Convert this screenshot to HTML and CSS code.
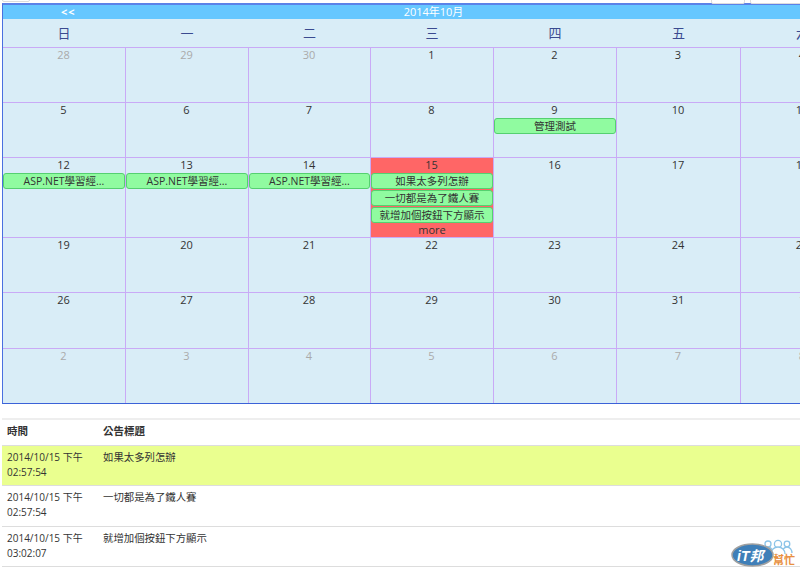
FILE: index.html
```html
<!DOCTYPE html>
<html lang="zh-Hant">
<head>
<meta charset="utf-8">
<title>行事曆</title>
<link rel="stylesheet" href="styles.css">
</head>
<body>
<div class="topbar">
  <span class="topbox tb1"></span>
  <span class="topbox tb2"></span>
  <span class="topbox tb3"></span>
</div>
<section class="calendar">
  <div class="cal-head">
    <span class="prev">&lt;&lt;</span>
    <span class="month">2014年10月</span>
  </div>
  <div class="grid weekdays">
    <div>日</div><div>一</div><div>二</div><div>三</div><div>四</div><div>五</div><div>六</div>
  </div>
  <div class="grid week wk">
    <div class="cell off"><div class="d">28</div></div>
    <div class="cell off"><div class="d">29</div></div>
    <div class="cell off"><div class="d">30</div></div>
    <div class="cell"><div class="d">1</div></div>
    <div class="cell"><div class="d">2</div></div>
    <div class="cell"><div class="d">3</div></div>
    <div class="cell"><div class="d">4</div></div>
  </div>
  <div class="grid week wk">
    <div class="cell"><div class="d">5</div></div>
    <div class="cell"><div class="d">6</div></div>
    <div class="cell"><div class="d">7</div></div>
    <div class="cell"><div class="d">8</div></div>
    <div class="cell"><div class="d">9</div><div class="ev">管理測試</div></div>
    <div class="cell"><div class="d">10</div></div>
    <div class="cell"><div class="d">11</div></div>
  </div>
  <div class="grid week wk-tall">
    <div class="cell"><div class="d">12</div><div class="ev">ASP.NET學習經...</div></div>
    <div class="cell"><div class="d">13</div><div class="ev">ASP.NET學習經...</div></div>
    <div class="cell"><div class="d">14</div><div class="ev">ASP.NET學習經...</div></div>
    <div class="cell today"><div class="d">15</div><div class="ev">如果太多列怎辦</div><div class="ev">一切都是為了鐵人賽</div><div class="ev">就增加個按鈕下方顯示</div><div class="more">more</div></div>
    <div class="cell"><div class="d">16</div></div>
    <div class="cell"><div class="d">17</div></div>
    <div class="cell"><div class="d">18</div></div>
  </div>
  <div class="grid week wk">
    <div class="cell"><div class="d">19</div></div>
    <div class="cell"><div class="d">20</div></div>
    <div class="cell"><div class="d">21</div></div>
    <div class="cell"><div class="d">22</div></div>
    <div class="cell"><div class="d">23</div></div>
    <div class="cell"><div class="d">24</div></div>
    <div class="cell"><div class="d">25</div></div>
  </div>
  <div class="grid week wk-b">
    <div class="cell"><div class="d">26</div></div>
    <div class="cell"><div class="d">27</div></div>
    <div class="cell"><div class="d">28</div></div>
    <div class="cell"><div class="d">29</div></div>
    <div class="cell"><div class="d">30</div></div>
    <div class="cell"><div class="d">31</div></div>
    <div class="cell off"><div class="d">1</div></div>
  </div>
  <div class="grid week wk last">
    <div class="cell off"><div class="d">2</div></div>
    <div class="cell off"><div class="d">3</div></div>
    <div class="cell off"><div class="d">4</div></div>
    <div class="cell off"><div class="d">5</div></div>
    <div class="cell off"><div class="d">6</div></div>
    <div class="cell off"><div class="d">7</div></div>
    <div class="cell off"><div class="d">8</div></div>
  </div>
</section>
<table class="notices">
  <thead>
    <tr><th class="c-time">時間</th><th>公告標題</th></tr>
  </thead>
  <tbody>
    <tr class="hl"><td>2014/10/15 下午<br>02:57:54</td><td class="c-title">如果太多列怎辦</td></tr>
    <tr><td>2014/10/15 下午<br>02:57:54</td><td class="c-title">一切都是為了鐵人賽</td></tr>
    <tr><td>2014/10/15 下午<br>03:02:07</td><td class="c-title">就增加個按鈕下方顯示</td></tr>
  </tbody>
</table>
<div class="logo">
  <svg width="68" height="36" viewBox="0 0 68 36" aria-hidden="true">
    <g fill="#fff" stroke="#8cc4e8" stroke-width="1.3">
      <circle cx="38" cy="8" r="3"/>
      <path d="M33 17c0-3 2-6 5-6s5 3 5 6"/>
      <circle cx="57" cy="8" r="2.8"/>
      <path d="M52 17c0-3 2-6 5-6s5 3 5 6"/>
      <circle cx="48" cy="8" r="3.6"/>
      <path d="M41 18c0-4 3-7 7-7s7 3 7 7"/>
    </g>
    <ellipse cx="22.5" cy="19" rx="20.5" ry="11" fill="#3f7fb8" stroke="#a0a0a0" stroke-width="1.5"/>
    <text x="7" y="25" class="logo-it">iT邦</text>
    <text x="43" y="28" class="logo-help">幫忙</text>
  </svg>
</div>
</body>
</html>
```
FILE: styles.css
```css
html, body {
  margin: 0;
  padding: 0;
  width: 800px;
  height: 576px;
  overflow: hidden;
  background: #fff;
  font-family: "Open Sans", "Noto Sans CJK TC", sans-serif;
  color: #333;
}
.topbar {
  height: 3px;
  position: relative;
}
.topbox {
  position: absolute;
  top: -4px;
  height: 6px;
  background: #fff;
  border: 1px solid #ddd;
  box-sizing: border-box;
  border-radius: 2px;
}
.tb1 { left: 2px; width: 28px; }
.tb2 { left: 711px; width: 34px; z-index: 2; top: -2px; }
.tb3 { left: 750px; width: 60px; z-index: 2; top: -2px; }
.calendar {
  margin-left: 2px;
  width: 862px;
  height: 401px;
  box-sizing: border-box;
  border-top: 2px solid #5b82e8;
  border-left: 1px solid #4a70e0;
  border-bottom: 1px solid #3b62d8;
  background: #d9edf7;
}
.cal-head {
  height: 14px;
  background: #66c7ff;
  color: #fff;
  font-size: 11px;
  line-height: 14px;
  position: relative;
  text-align: center;
}
.month { display: block; }
.prev {
  position: absolute;
  left: 58px;
  top: 0;
  font-weight: 700;
  letter-spacing: 1px;
}
.grid {
  display: grid;
  grid-template-columns: 123px 123px 122px 123px 123px 124px 124px;
}
.weekdays {
  height: 28px;
  line-height: 28px;
  font-size: 13px;
  text-align: center;
  color: #3a4a90;
}
.weekdays > div { padding-right: 1px; }
.week { border-top: 1px solid #c9aaf6; box-sizing: border-box; }
.wk { height: 55px; }
.wk-b { height: 56px; }
.wk-tall { height: 80px; }
.cell {
  border-right: 1px solid #c9aaf6;
  box-sizing: border-box;
  min-width: 0;
}
.d {
  height: 15px;
  line-height: 14px;
  font-size: 11px;
  text-align: center;
  color: #333;
  padding-right: 1px;
}
.off .d { color: #aaa; }
.ev {
  height: 16px;
  line-height: 14px;
  box-sizing: border-box;
  border: 1px solid #55d070;
  border-radius: 3px;
  background: #90fba0;
  font-size: 10.5px;
  text-align: center;
  color: #333;
  white-space: nowrap;
  overflow: hidden;
}
.today { background: #ff6666; }
.today .ev + .ev { margin-top: 1px; }
.more {
  height: 14px;
  line-height: 14px;
  text-align: center;
  font-size: 11px;
  color: #333;
}
.notices {
  margin: 14px 0 0 2px;
  width: 798px;
  border-collapse: collapse;
  font-size: 10px;
  line-height: 15px;
  color: #333;
  border-top: 2px solid #eee;
}
.notices th {
  text-align: left;
  height: 26px;
  padding: 0 5px 1px;
  box-sizing: border-box;
  font-size: 10.5px;
  font-weight: 700;
  border-bottom: 1px solid #ddd;
}
.notices .c-time { width: 96px; }
.notices td {
  vertical-align: top;
  height: 40.5px;
  box-sizing: border-box;
  padding: 4px 5px 0;
  border-bottom: 1px solid #ddd;
}
.notices .c-title { font-size: 10.4px; }
.notices .hl td { background: #eaff8f; }
.logo {
  position: absolute;
  left: 730px;
  top: 536px;
  width: 68px;
  height: 36px;
}
.logo-it {
  font-family: "Liberation Sans", "Noto Sans CJK TC", sans-serif;
  font-size: 14px;
  font-weight: 700;
  font-style: italic;
  fill: #fff;
}
.logo-help {
  font-family: "Noto Sans CJK TC", sans-serif;
  font-size: 11px;
  font-weight: 700;
  fill: #e89040;
}
```
